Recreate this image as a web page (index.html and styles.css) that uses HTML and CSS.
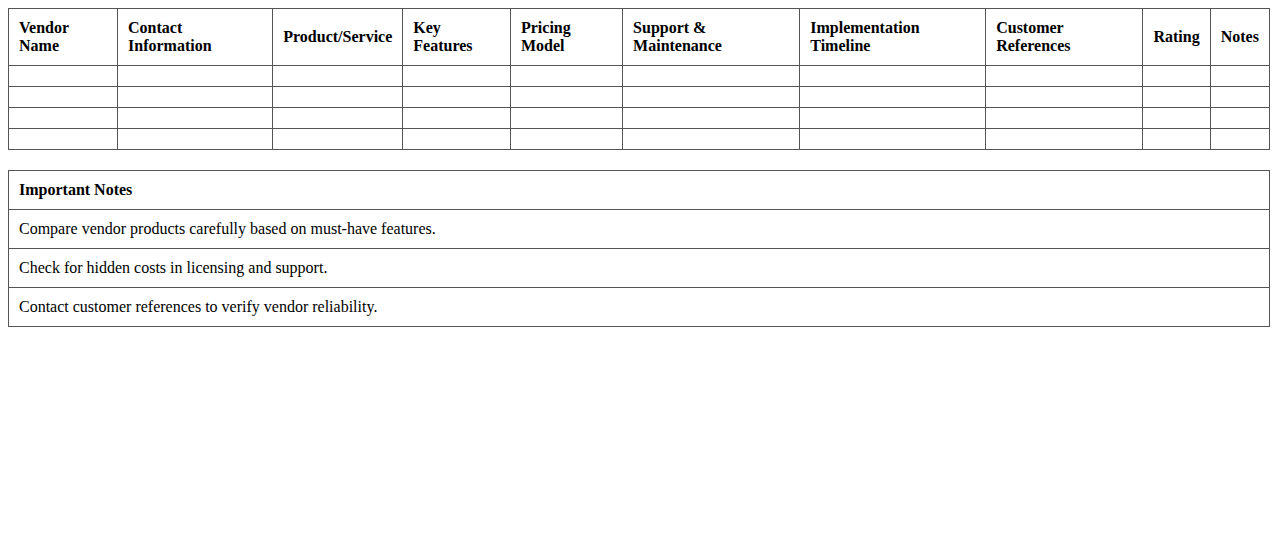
FILE: index.html
```html
<!DOCTYPE html>
<html>
<head>
<meta charset="utf-8">
<link rel="stylesheet" href="styles.css">
</head>
<body>
<table class="grid">
  <thead>
    <tr>
      <th>Vendor Name</th>
      <th>Contact Information</th>
      <th>Product/Service</th>
      <th>Key Features</th>
      <th>Pricing Model</th>
      <th>Support &amp; Maintenance</th>
      <th>Implementation Timeline</th>
      <th>Customer References</th>
      <th>Rating</th>
      <th>Notes</th>
    </tr>
  </thead>
  <tbody>
    <tr><td></td><td></td><td></td><td></td><td></td><td></td><td></td><td></td><td></td><td></td></tr>
    <tr><td></td><td></td><td></td><td></td><td></td><td></td><td></td><td></td><td></td><td></td></tr>
    <tr><td></td><td></td><td></td><td></td><td></td><td></td><td></td><td></td><td></td><td></td></tr>
    <tr><td></td><td></td><td></td><td></td><td></td><td></td><td></td><td></td><td></td><td></td></tr>
  </tbody>
</table>
<table class="grid notes">
  <tr><th>Important Notes</th></tr>
  <tr><td>Compare vendor products carefully based on must-have features.</td></tr>
  <tr><td>Check for hidden costs in licensing and support.</td></tr>
  <tr><td>Contact customer references to verify vendor reliability.</td></tr>
</table>
</body>
</html>
```
FILE: styles.css
```css
body {
  margin: 8px;
  font-family: "Liberation Serif", "Times New Roman", serif;
  font-size: 16px;
  color: #000;
  background: #fff;
}
.grid {
  width: 100%;
  border-collapse: collapse;
}
.grid th,
.grid td {
  border: 1px solid #555;
  padding: 10px;
  text-align: left;
  vertical-align: middle;
}
.grid th {
  font-weight: bold;
}
.notes {
  margin-top: 20px;
}
```
